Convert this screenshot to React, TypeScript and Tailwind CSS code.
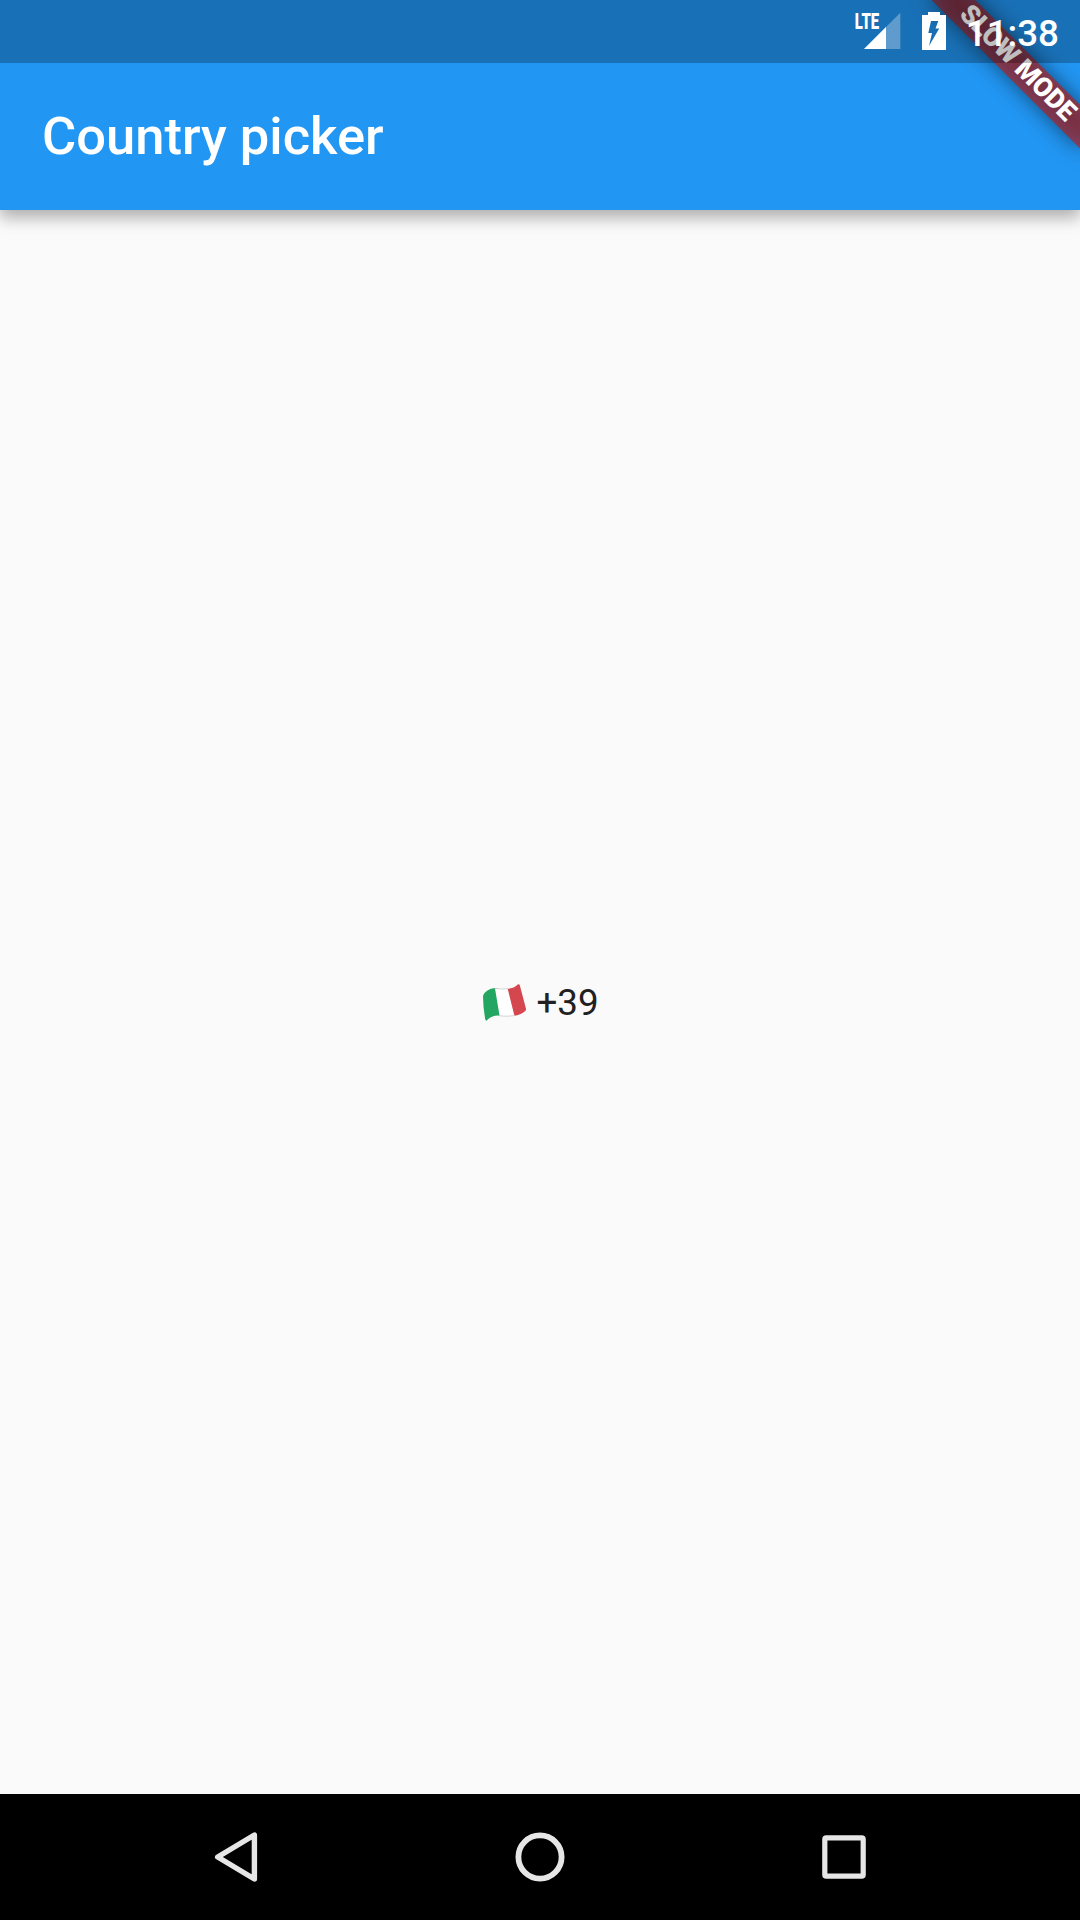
function ItalyFlag() {
  return (
    <svg className="relative top-[3px] h-[42px] w-[46px] shrink-0" viewBox="0 0 46 42" fill="none">
      <path d="M2.7 10.2C7 4.5 12 4 16.5 4.4L20.8 32C14.5 30.5 10 32 5.7 36.6Q4.6 37 4.3 35.6Q2 23 2 12Z" fill="#23a661" />
      <path d="M14 4.4C20 5 23 4.8 27 4.6L34 31.6C28 32.5 24 32.5 18.6 31.9Z" fill="#fff" />
      <path d="M26.7 4.8C31 4.6 34.5 3 37.1.3Q38.3-.3 38.8 1.3L45 24.8Q45.2 26.2 44 27.2C40.8 30 37.5 31 33.4 31.7Z" fill="#d4474f" />
      <path d="M14 4.4C20 5.2 23 4.9 27 4.7M18.6 31.7C24 32.5 28 32.3 34 31.5" stroke="#c9c9c9" strokeWidth="0.8" />
    </svg>
  );
}

function StatusBar() {
  return (
    <div className="relative z-20 flex h-[63px] items-start justify-end bg-black/25 pr-[21px] text-white">
      <svg className="mt-[10px] mr-[19px] h-[42px] w-[48px]" viewBox="0 0 48 42">
        <path d="M46.3 2.7V39H10Z" fill="#5f9bcd" />
        <path d="M32 17V39H10Z" fill="#fff" />
        <text x="0.8" y="19" fontFamily="Roboto" fontWeight="900" fontSize="22.5" textLength="24.4" lengthAdjust="spacingAndGlyphs" fill="#fff">LTE</text>
      </svg>
      <svg className="mt-[12px] mr-[19px] h-[38px] w-[26px]" viewBox="0 0 26 38">
        <path fillRule="evenodd" fill="#fff" d="M7 0H19V3H25V38H1V3H7ZM10 9H17.3L14.5 16.5H18.2L8 34L11 21H7.3Z" />
      </svg>
      <span className="mt-[12px] text-[36.75px] leading-[43px] font-medium">11:38</span>
    </div>
  );
}

function SlowModeRibbon() {
  return (
    <div className="pointer-events-none absolute top-0 right-0 h-[300px] w-[300px] overflow-hidden">
      <div className="absolute top-0 left-[300px] origin-top-left rotate-45">
        <div className="absolute top-[73.5px] left-[-105px] flex h-[31.5px] w-[210px] items-center justify-center bg-[#b71c1c]/63 pb-px pl-px text-[26.78px] leading-none font-black tracking-[-0.2px] whitespace-nowrap text-white">
          <div className="absolute inset-0 -z-10 bg-black/50 blur-[10.5px]" />
          SLOW MODE
        </div>
      </div>
    </div>
  );
}

function NavigationBar() {
  return (
    <nav className="flex h-[126px] items-center justify-center gap-[244px] bg-black text-[#e6e6e6]">
      <svg className="size-[60px]" viewBox="0 0 60 60" fill="none" stroke="currentColor" strokeWidth="5.4" strokeLinejoin="round">
        <path d="M48.4 8V52L11.7 30Z" />
      </svg>
      <svg className="size-[60px]" viewBox="0 0 60 60" fill="none" stroke="currentColor" strokeWidth="5.8">
        <circle cx="30" cy="30" r="21.6" />
      </svg>
      <svg className="size-[60px]" viewBox="0 0 60 60" fill="none" stroke="currentColor" strokeWidth="5.2" strokeLinejoin="round">
        <rect x="10.8" y="10.8" width="38.4" height="38.4" rx="1.5" />
      </svg>
    </nav>
  );
}

export default function App() {
  return (
    <div className="flex h-[1920px] w-[1080px] flex-col overflow-hidden bg-[#fafafa] font-['Roboto',sans-serif]">
      <header className="relative isolate h-[210px] shrink-0 bg-[#2196f3] shadow-[0_8px_15px_0_rgba(0,0,0,0.25),0_2px_18px_rgba(0,0,0,0.1)]">
        <SlowModeRibbon />
        <StatusBar />
        <div className="flex h-[147px] items-center pb-[2px] pl-[42px]">
          <h1 className="text-[52.5px] leading-[62px] font-medium text-white">Country picker</h1>
        </div>
      </header>
      <main className="flex flex-1 items-center justify-center">
        <button className="flex items-center text-[36.75px] leading-[43px] text-[#212121]">
          <ItalyFlag />
          <span className="ml-[9px]">+39</span>
        </button>
      </main>
      <NavigationBar />
    </div>
  );
}
